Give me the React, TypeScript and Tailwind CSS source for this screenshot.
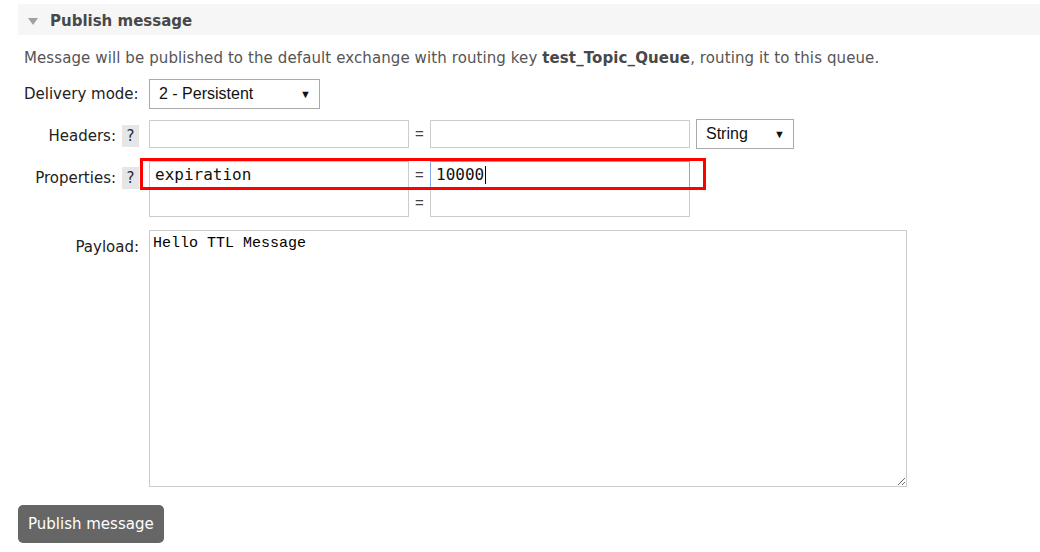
import React from 'react';

const sans = "font-['DejaVu_Sans',Verdana,sans-serif]";

const Help: React.FC = () => (
  <span className="ml-[6px] flex h-[22px] w-[17px] items-center justify-center bg-[#e6e6e6] text-[15px] text-[#1f2a44]">?</span>
);

const Field: React.FC<{ value?: string; focused?: boolean; caret?: boolean }> = ({ value, focused, caret }) => (
  <div
    className={`flex h-[28px] w-[260px] items-center border px-[5px] font-['DejaVu_Sans_Mono',monospace] text-[16px] text-[#111] ${
      focused ? 'border-[#7fa8e6]' : 'border-[#cccccc]'
    }`}
  >
    {value}
    {caret && <span className="ml-[1px] h-[18px] w-px bg-black" />}
  </div>
);

const Select: React.FC<{ label: string; width: string }> = ({ label, width }) => (
  <div
    className={`flex h-[30px] ${width} items-center justify-between border border-[#aaaaaa] bg-white pl-[9px] pr-[8px] font-['Liberation_Sans',Arial,sans-serif] text-[16px] text-[#111]`}
  >
    <span>{label}</span>
    <span className="text-[11px]">▼</span>
  </div>
);

const Eq: React.FC = () => <span className="w-[21px] text-center font-['Liberation_Sans',Arial,sans-serif] text-[15px] text-[#444]">=</span>;

export default function App() {
  return (
    <div className={`h-[552px] w-[1040px] overflow-hidden bg-white pt-[4px] pl-[18px] ${sans}`}>
      <div className="flex h-[31px] items-center bg-[#f6f6f6] pt-[3px] pl-[10px]">
        <svg width="10" height="7" viewBox="0 0 10 7" className="mt-[1px]">
          <path d="M0 0 L10 0 L5 7 Z" fill="#a0a0a0" />
        </svg>
        <span className="ml-[12px] text-[15px] font-bold text-[#484848]">Publish message</span>
      </div>

      <p className="mt-[13px] whitespace-nowrap pl-[6px] text-[15px] leading-[20px] tracking-[0.1px] text-[#555]">
        Message will be published to the default exchange with routing key{' '}
        <b className="text-[#484848]">test_Topic_Queue</b>, routing it to this queue.
      </p>

      <div className="mt-[11px] flex items-center">
        <div className="w-[121px] whitespace-nowrap pl-[6px] text-[15px] text-[#222]">Delivery mode:</div>
        <div className="ml-[10px]">
          <Select label="2 - Persistent" width="w-[171px]" />
        </div>
      </div>

      <div className="mt-[10px] flex items-start">
        <div className="mt-[3px] flex h-[28px] w-[121px] items-center justify-end whitespace-nowrap text-[15px] text-[#222]">
          Headers:
          <Help />
        </div>
        <div className="ml-[10px] flex items-center">
          <Field />
          <Eq />
          <Field />
          <div className="ml-[6px]">
            <Select label="String" width="w-[98px]" />
          </div>
        </div>
      </div>

      <div className="mt-[11px] flex items-start">
        <div className="mt-[3px] flex h-[28px] w-[121px] items-center justify-end whitespace-nowrap text-[15px] text-[#222]">
          Properties:
          <Help />
        </div>
        <div className="relative ml-[10px]">
          <div className="flex items-center">
            <Field value="expiration" />
            <Eq />
            <Field value="10000" focused caret />
          </div>
          <div className="flex items-center">
            <Field />
            <Eq />
            <Field />
          </div>
          <div className="pointer-events-none absolute top-[-3px] left-[-9px] h-[32px] w-[566px] border-[3px] border-[#ff0000]" />
        </div>
      </div>

      <div className="mt-[13px] flex items-start">
        <div className="w-[121px] whitespace-nowrap pt-[6px] text-right text-[15px] text-[#222]">Payload:</div>
        <div className="ml-[10px]">
          <textarea
            readOnly
            defaultValue="Hello TTL Message"
            className="block h-[257px] w-[758px] border border-[#cccccc] px-[3px] py-[3px] font-['Liberation_Mono','Courier_New',monospace] text-[15px] leading-[20px] text-black outline-none"
          />
        </div>
      </div>

      <button className="mt-[18px] h-[38px] rounded-[5px] bg-[#666666] px-[10px] text-[15px] text-white">
        Publish message
      </button>
    </div>
  );
}
